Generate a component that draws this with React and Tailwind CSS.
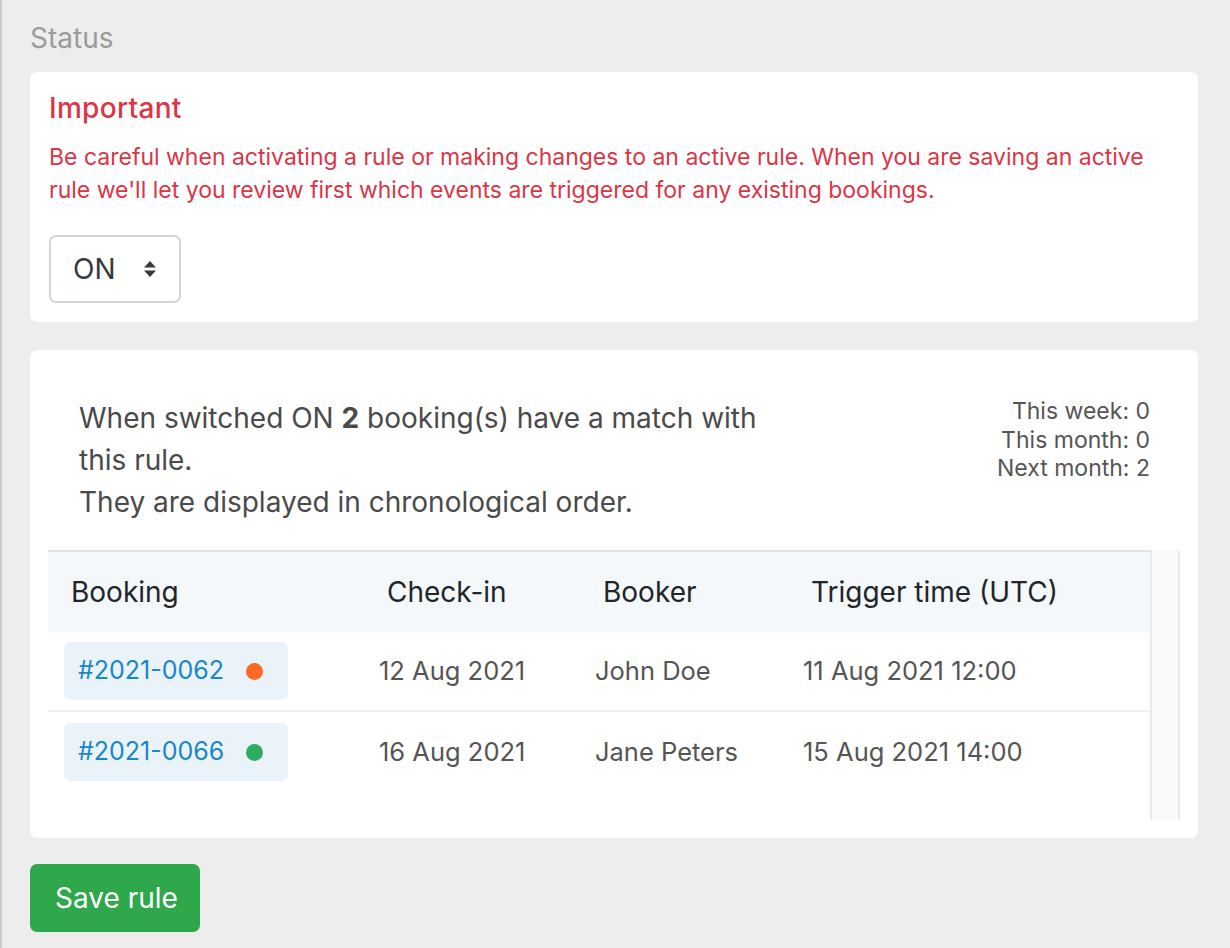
import React from 'react';

const rows = [
  { id: '#2021-0062', dot: 'bg-[#ff6a22]', checkIn: '12 Aug 2021', booker: 'John Doe', trigger: '11 Aug 2021 12:00' },
  { id: '#2021-0066', dot: 'bg-[#2fac5e]', checkIn: '16 Aug 2021', booker: 'Jane Peters', trigger: '15 Aug 2021 14:00' },
];

const SortArrows = () => (
  <svg width="14" height="18" viewBox="0 0 14 18" className="fill-[#343a40]">
    <path d="M7 1 L13 7.5 H1 Z" />
    <path d="M7 17 L13 10.5 H1 Z" />
  </svg>
);

export default function App() {
  return (
    <div
      className="min-h-[948px] bg-[#ededed] border-l-2 border-[#c9c9c9] pl-[28px] pr-[32px] pt-[21px] pb-[16px]"
      style={{ fontFamily: 'Inter, "Noto Sans", sans-serif' }}
    >
      {/* Section title */}
      <h2 className="text-[28px] leading-[34px] text-[#9b9b9b] mb-[17px]">Status</h2>

      {/* Status card */}
      <div className="bg-white rounded-[7px] px-[19px] pt-[19px] pb-[19px]">
        <h3 className="text-[28px] leading-[34px] font-medium text-[#dc3545] tracking-[0.3px]">Important</h3>
        <p className="mt-[16px] text-[23px] leading-[33px] text-[#dc3545]">
          Be careful when activating a rule or making changes to an active rule. When you are saving an active rule we'll let you review first which events are triggered for any existing bookings.
        </p>
        <div className="mt-[28px] w-[132px] h-[68px] border-2 border-[#d2d6db] rounded-[7px] flex items-center justify-between pl-[22px] pr-[22px]">
          <span className="text-[28px] text-[#343a40]">ON</span>
          <SortArrows />
        </div>
      </div>

      {/* Matches card */}
      <div className="mt-[28px] bg-white rounded-[7px] px-[18px] pt-[47px] pb-[18px]">
        <div className="flex justify-between pr-[30px]">
          <div className="pl-[31px] w-[731px] text-[28px] leading-[42px] text-[#4a4a4a]">
            <p>
              When switched ON <b className="font-bold">2</b> booking(s) have a match with this rule.
            </p>
            <p>They are displayed in chronological order.</p>
          </div>
          <div className="text-right text-[23px] leading-[28.5px] text-[#555]">
            <div>This week: 0</div>
            <div>This month: 0</div>
            <div>Next month: 2</div>
          </div>
        </div>

        <div className="mt-[27px] flex h-[270px]">
          <div className="flex-1 border-t-2 border-[#dfe3e8]">
            <div className="grid grid-cols-[315px_216px_208px_1fr] h-[80px] items-center bg-[#f5f8fb] text-[28px] text-[#212529]">
              <div className="pl-[23px]">Booking</div>
              <div className="pl-[24px]">Check-in</div>
              <div className="pl-[24px]">Booker</div>
              <div className="pl-[24px]">Trigger time (UTC)</div>
            </div>
            {rows.map((r, i) => (
              <div
                key={r.id}
                className={
                  'grid grid-cols-[315px_216px_208px_1fr] h-[80px] items-center text-[25.5px] text-[#555] ' +
                  (i === 0 ? 'border-b-2 border-[#f0f0f0]' : '')
                }
              >
                <div className="pl-[16px]">
                  <div className="w-[224px] h-[58px] rounded-[7px] bg-[#eaf3f9] flex items-center pl-[14px]">
                    <span className="text-[#1b86c8] text-[25px]">{r.id}</span>
                    <span className={'ml-[22px] w-[17px] h-[17px] rounded-full ' + r.dot} />
                  </div>
                </div>
                <div className="pl-[16px]">{r.checkIn}</div>
                <div className="pl-[16px]">{r.booker}</div>
                <div className="pl-[16px]">{r.trigger}</div>
              </div>
            ))}
          </div>
          {/* scrollbar track */}
          <div className="w-[30px] bg-[#fafafa] border-l-2 border-r-2 border-[#ebebeb]" />
        </div>
      </div>

      <button className="mt-[26px] w-[170px] h-[68px] rounded-[7px] bg-[#2ea84b] text-white text-[28px] text-left pl-[25px]">
        Save rule
      </button>
    </div>
  );
}
